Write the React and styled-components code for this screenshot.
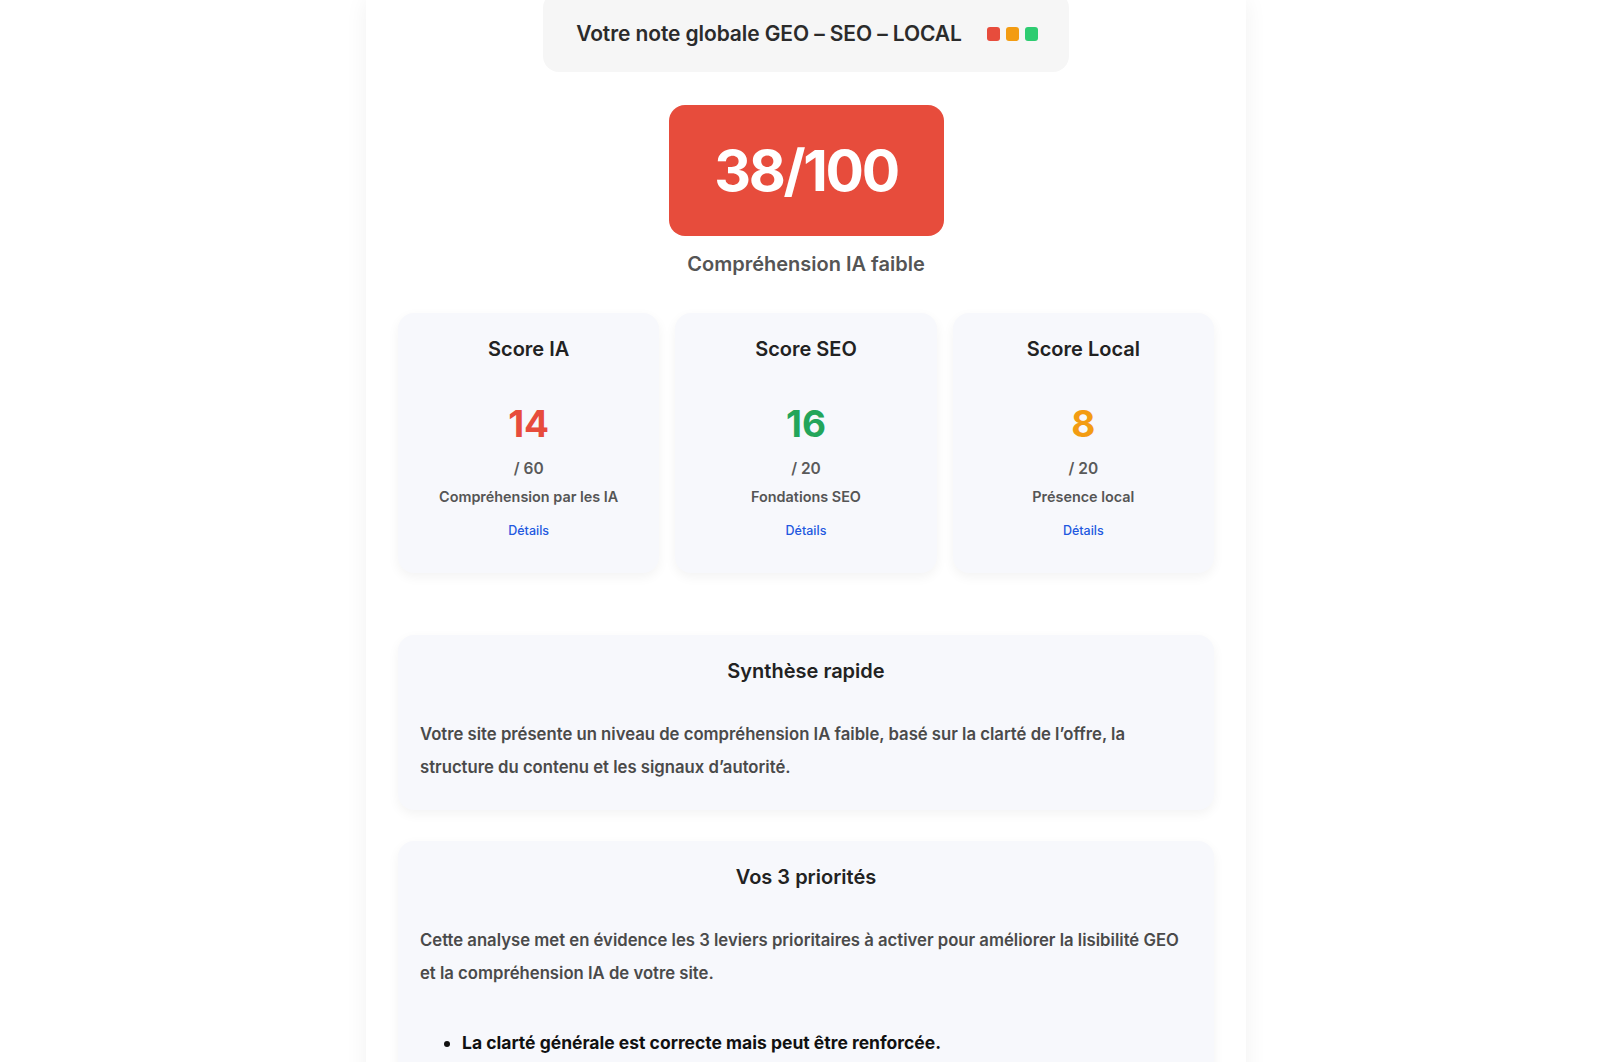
import React from 'react';
import styled, { createGlobalStyle } from 'styled-components';

const GlobalStyle = createGlobalStyle`
  html, body {
    margin: 0;
    padding: 0;
    background: #ffffff;
    font-family: Inter, "Noto Sans", "Liberation Sans", sans-serif;
    -webkit-font-smoothing: antialiased;
  }
  * {
    box-sizing: border-box;
  }
`;

const Page = styled.div`
  width: 880px;
  margin: 0 auto;
  min-height: 1062px;
  background: #ffffff;
  padding: 0 32px 40px;
  box-shadow: 0 0 22px rgba(0, 0, 0, 0.06);
  display: flex;
  flex-direction: column;
  align-items: center;
`;

const Header = styled.div`
  margin-top: -8px;
  padding: 30px 31px 26px 33px;
  background: #f6f6f6;
  border-radius: 16px;
  display: flex;
  align-items: center;
  gap: 25px;
`;

const HeaderTitle = styled.h1`
  margin: 0;
  font-size: 21px;
  line-height: 24px;
  font-weight: 600;
  color: #2b2b2b;
  letter-spacing: -0.1px;
`;

const Dots = styled.div`
  display: flex;
  gap: 6px;
`;

const Dot = styled.span`
  width: 13px;
  height: 14px;
  border-radius: 3px;
  background: ${(p) => p.color};
`;

const Badge = styled.div`
  margin-top: 33px;
  width: 275px;
  height: 131px;
  border-radius: 16px;
  background: #e74c3c;
  color: #ffffff;
  font-size: 57px;
  font-weight: 700;
  letter-spacing: -2.3px;
  display: flex;
  align-items: center;
  justify-content: center;
`;

const Verdict = styled.p`
  margin: 16px 0 0;
  font-size: 20px;
  line-height: 24px;
  font-weight: 600;
  color: #555555;
`;

const Cards = styled.div`
  margin-top: 37px;
  width: 100%;
  display: grid;
  grid-template-columns: repeat(3, 1fr);
  gap: 16px;
`;

const Card = styled.div`
  height: 260px;
  padding: 24px 16px;
  background: #f7f8fc;
  border-radius: 16px;
  box-shadow: 0 4px 12px rgba(0, 0, 0, 0.05);
  display: flex;
  flex-direction: column;
  align-items: center;
  text-align: center;
`;

const CardTitle = styled.h3`
  margin: 0;
  font-size: 20px;
  line-height: 24px;
  font-weight: 600;
  color: #222222;
`;

const ScoreValue = styled.div`
  margin-top: 39px;
  font-size: 37px;
  line-height: 48px;
  font-weight: 700;
  color: ${(p) => p.color};
`;

const ScoreMax = styled.div`
  margin-top: 11px;
  font-size: 15.5px;
  line-height: 20px;
  font-weight: 600;
  color: #5a5a5a;
`;

const ScoreLabel = styled.div`
  margin-top: 9px;
  font-size: 14.4px;
  line-height: 18px;
  font-weight: 600;
  color: #555555;
`;

const DetailsLink = styled.a`
  margin-top: 17px;
  font-size: 12.5px;
  line-height: 16px;
  font-weight: 500;
  color: #2258e0;
  text-decoration: none;
  cursor: pointer;
`;

const Section = styled.section`
  width: 100%;
  margin-top: ${(p) => p.gap}px;
  padding: 24px 22px 26px;
  background: #f7f8fc;
  border-radius: 16px;
  box-shadow: 0 4px 12px rgba(0, 0, 0, 0.05);
`;

const SectionTitle = styled.h3`
  margin: 0;
  text-align: center;
  font-size: 20px;
  line-height: 24px;
  font-weight: 600;
  color: #222222;
`;

const SectionText = styled.p`
  margin: 35px 0 0;
  font-size: 16.7px;
  line-height: 33px;
  font-weight: 600;
  color: #4a4a4a;
`;

const List = styled.ul`
  margin: 40px 0 0;
  padding-left: 42px;
`;

const ListItem = styled.li`
  margin-bottom: 14px;
  font-size: 17.5px;
  line-height: 26px;
  font-weight: 700;
  color: #111111;
`;

const scores = [
  { title: 'Score IA', value: 14, max: 60, label: 'Compréhension par les IA', color: '#e74c3c' },
  { title: 'Score SEO', value: 16, max: 20, label: 'Fondations SEO', color: '#23a55a' },
  { title: 'Score Local', value: 8, max: 20, label: 'Présence local', color: '#f39c12' },
];

const App = () => {
  return (
    <>
      <GlobalStyle />
      <Page>
        <Header>
          <HeaderTitle>Votre note globale GEO – SEO – LOCAL</HeaderTitle>
          <Dots>
            <Dot color="#e74c3c" />
            <Dot color="#f39c12" />
            <Dot color="#2ecc71" />
          </Dots>
        </Header>

        <Badge>38/100</Badge>
        <Verdict>Compréhension IA faible</Verdict>

        <Cards>
          {scores.map((s) => (
            <Card key={s.title}>
              <CardTitle>{s.title}</CardTitle>
              <ScoreValue color={s.color}>{s.value}</ScoreValue>
              <ScoreMax>/ {s.max}</ScoreMax>
              <ScoreLabel>{s.label}</ScoreLabel>
              <DetailsLink href="#">Détails</DetailsLink>
            </Card>
          ))}
        </Cards>

        <Section gap={62}>
          <SectionTitle>Synthèse rapide</SectionTitle>
          <SectionText>
            Votre site présente un niveau de compréhension IA faible, basé sur la clarté de l’offre, la
            <br />
            structure du contenu et les signaux d’autorité.
          </SectionText>
        </Section>

        <Section gap={31}>
          <SectionTitle>Vos 3 priorités</SectionTitle>
          <SectionText>
            Cette analyse met en évidence les 3 leviers prioritaires à activer pour améliorer la lisibilité GEO
            <br />
            et la compréhension IA de votre site.
          </SectionText>
          <List>
            <ListItem>La clarté générale est correcte mais peut être renforcée.</ListItem>
          </List>
        </Section>
      </Page>
    </>
  );
};

export default App;
